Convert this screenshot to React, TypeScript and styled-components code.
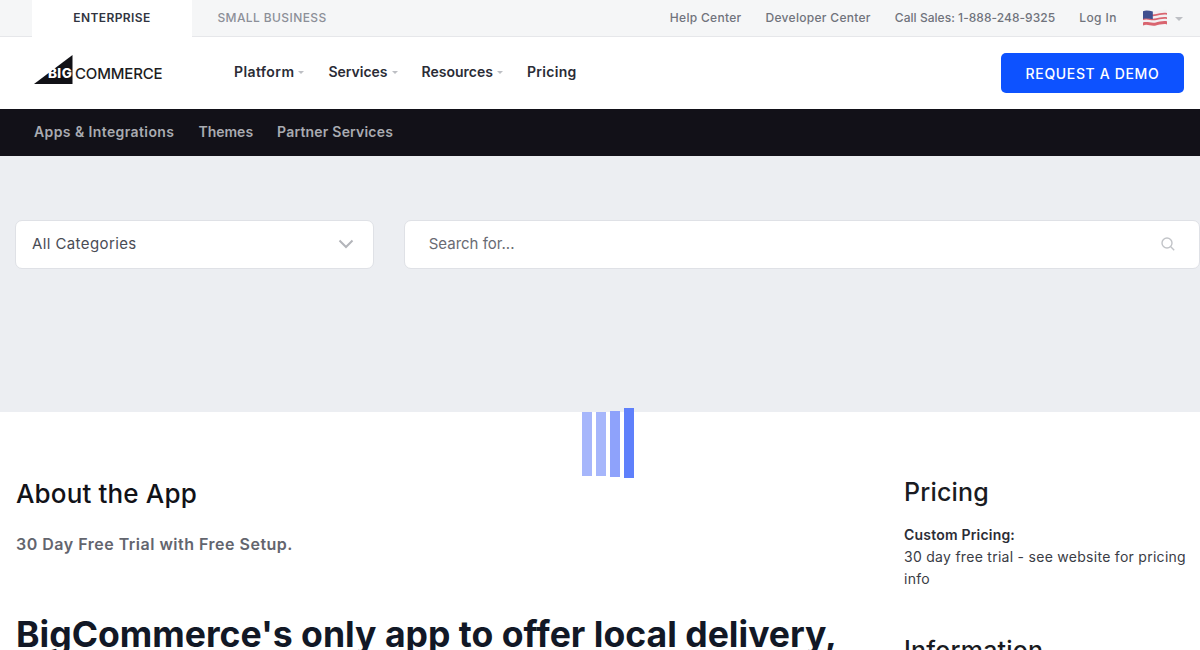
import * as React from 'react';
import styled, { createGlobalStyle } from 'styled-components';

const GlobalStyle = createGlobalStyle`
  html, body {
    margin: 0;
    padding: 0;
    height: 650px;
    overflow: hidden;
    background: #fff;
    font-family: Inter, "Liberation Sans", sans-serif;
  }
`;

const Page = styled.div`
  width: 1200px;
  height: 650px;
  overflow: hidden;
  position: relative;
`;

const TopBar = styled.div`
  height: 36px;
  display: flex;
  align-items: center;
  justify-content: space-between;
  padding: 0 17px 0 32px;
  background: #f5f6f7;
  border-bottom: 1px solid #e6e7ea;
`;

const Tabs = styled.div`
  display: flex;
  align-self: stretch;
`;

const Tab = styled.a<{ $active?: boolean }>`
  width: 160px;
  height: 37px;
  display: flex;
  align-items: center;
  justify-content: center;
  box-sizing: border-box;
  padding-bottom: 2px;
  background: ${(p) => (p.$active ? '#fff' : 'transparent')};
  color: ${(p) => (p.$active ? '#313440' : '#8c8f98')};
  font-size: 12px;
  font-weight: ${(p) => (p.$active ? 600 : 500)};
  letter-spacing: 0.4px;
`;

const TopLinks = styled.div`
  display: flex;
  align-items: center;
  gap: 24px;
  margin-top: -1px;
`;

const TopLink = styled.a<{ $track?: number }>`
  color: #70737c;
  font-size: 12px;
  font-weight: 500;
  letter-spacing: ${(p) => p.$track ?? 0.3}px;
`;

const FlagGroup = styled.div`
  display: flex;
  align-items: center;
  gap: 8px;
  margin-left: 2px;
`;

const MainNav = styled.div`
  height: 72px;
  display: flex;
  align-items: center;
  padding: 0 16px 0 34px;
  background: #fff;
`;

const LogoWrap = styled.div`
  width: 200px;
  height: 44px;
  margin-top: -7px;
  display: flex;
  align-items: center;
  position: relative;
`;

const LogoBig = styled.span`
  position: absolute;
  left: 14px;
  top: 17px;
  color: #fff;
  font-size: 13.5px;
  font-weight: 800;
  letter-spacing: 0.4px;
`;

const LogoCommerce = styled.span`
  position: absolute;
  left: 41px;
  top: 16px;
  color: #1d1d22;
  font-size: 15px;
  font-weight: 500;
  letter-spacing: -0.15px;
`;

const MenuList = styled.nav`
  display: flex;
  align-items: center;
  gap: 24px;
  margin-top: -4px;
`;

const MenuItem = styled.a<{ $track?: number }>`
  display: flex;
  align-items: center;
  gap: 4px;
  color: #2a2c36;
  font-size: 14px;
  font-weight: 600;
  letter-spacing: ${(p) => p.$track ?? 0}px;
`;

const Caret = styled.span<{ $size?: number }>`
  width: 0;
  height: 0;
  margin-top: 2px;
  border-left: ${(p) => p.$size ?? 3}px solid transparent;
  border-right: ${(p) => p.$size ?? 3}px solid transparent;
  border-top: ${(p) => p.$size ?? 3}px solid #bdbfc4;
`;

const DemoButton = styled.a`
  margin-left: auto;
  width: 183px;
  height: 40px;
  display: flex;
  align-items: center;
  justify-content: center;
  background: #0d52ff;
  border-radius: 5px;
  color: #fff;
  font-size: 14px;
  font-weight: 500;
  letter-spacing: 0.65px;
`;

const SubNav = styled.div`
  height: 47px;
  box-sizing: border-box;
  padding: 0 34px 2px;
  display: flex;
  align-items: center;
  gap: 24px;
  background: #121118;
`;

const SubLink = styled.a<{ $track?: number }>`
  color: #a9abb1;
  font-size: 14px;
  font-weight: 600;
  letter-spacing: ${(p) => p.$track ?? 0}px;
`;

const FilterBand = styled.div`
  height: 256px;
  box-sizing: border-box;
  display: flex;
  gap: 30px;
  padding: 64px 0 0 15px;
  background: #eceef2;
`;

const Field = styled.div<{ $grow?: boolean }>`
  height: 49px;
  box-sizing: border-box;
  padding-bottom: 2px;
  display: flex;
  align-items: center;
  justify-content: space-between;
  background: #fff;
  border: 1px solid #dfe1e6;
  border-radius: 7px;
  ${(p) =>
    p.$grow
      ? 'width: 797px; padding-left: 24px; padding-right: 23px;'
      : 'width: 359px; padding-left: 16px; padding-right: 19px;'}
`;

const FieldText = styled.span<{ $muted?: boolean }>`
  color: ${(p) => (p.$muted ? '#696b73' : '#4a4c55')};
  font-size: 15px;
  letter-spacing: ${(p) => (p.$muted ? 0 : 0.4)}px;
`;

const Body = styled.div`
  display: flex;
  justify-content: space-between;
  padding: 0 12px 0 16px;
`;

const MainColumn = styled.div`
  width: 860px;
  padding-top: 66px;
`;

const AboutTitle = styled.h2`
  margin: 0;
  color: #111218;
  font-size: 26px;
  line-height: 32px;
  font-weight: 500;
  letter-spacing: 0.15px;
`;

const Lead = styled.p`
  margin: 23px 0 0;
  color: #63656e;
  font-size: 16px;
  line-height: 22px;
  font-weight: 600;
  letter-spacing: 0.5px;
`;

const Headline = styled.h1`
  margin: 57px 0 0;
  color: #121826;
  font-size: 35.6px;
  line-height: 46px;
  font-weight: 700;
  white-space: nowrap;
`;

const SideColumn = styled.aside`
  width: 284px;
  padding-top: 64px;
`;

const SideTitle = styled.h3`
  margin: 0;
  color: #1a1b22;
  font-size: 25px;
  line-height: 32px;
  font-weight: 500;
  letter-spacing: 0.2px;
`;

const SideStrong = styled.div`
  margin-top: 16px;
  color: #2b2d36;
  font-size: 14px;
  line-height: 22px;
  font-weight: 600;
  letter-spacing: 0.2px;
`;

const SideText = styled.p`
  margin: 0;
  color: #3a3c45;
  font-size: 14px;
  line-height: 22px;
  letter-spacing: 0.28px;
`;

const SideBlock = styled.div`
  margin-top: 44px;
`;

const Loader = styled.div`
  position: absolute;
  left: 582px;
  top: 408px;
  height: 72px;
  display: flex;
  align-items: center;
  gap: 4px;
`;

const LoaderBar = styled.span<{ $h: number; $color: string; $lift?: number }>`
  width: 10px;
  height: ${(p) => p.$h}px;
  margin-bottom: ${(p) => p.$lift ?? 0}px;
  background: ${(p) => p.$color};
`;

const UsFlag = () => (
  <svg width="24" height="18" viewBox="1 0.5 22 16.500">
    <path d="M1 2.500c4-1.600 7 .8 11 .2s7-2 11-1.200v13.600c-4-.8-7 .6-11 1.200s-7-1.800-11-.2z" fill="#f3f0f2" />
    <path d="M1 5.200c4-1 7 .8 11 .2s7-2 11-1.200v1.600c-4-.8-7 .6-11 1.200S5 5.200 1 6.800zM1 9c4-1 7 .8 11 .2s7-2 11-1.200v1.600c-4-.8-7 .6-11 1.200S5 9 1 10.600zM1 12.800c4-1 7 .8 11 .2s7-2 11-1.200v2.800c-4-.8-7 .6-11 1.200s-7-1.800-11-.2z" fill="#d9646f" />
    <path d="M1 2.500c3-1.200 6-.3 9 .2v7.200c-3-.5-6-1.200-9-.3z" fill="#3f4f8f" />
  </svg>
);

const BigLogoMark = () => (
  <svg width="40" height="30" viewBox="0 0 40 30">
    <path d="M0 29 38.500 0v29z" fill="#111116" />
  </svg>
);

const Chevron = () => (
  <svg width="16" height="10" viewBox="0 0 16 10" fill="none" stroke="#b3b5ba" strokeWidth="2">
    <path d="M1.500 1.500 8 8l6.500-6.500" />
  </svg>
);

const SearchIcon = () => (
  <svg width="16" height="16" viewBox="0 0 16 16" fill="none" stroke="#c2c4c8" strokeWidth="1.400">
    <circle cx="7" cy="7" r="5" />
    <path d="m10.800 10.800 3.400 3.400" />
  </svg>
);

export default function App() {
  return (
    <Page>
      <GlobalStyle />
      <TopBar>
        <Tabs>
          <Tab $active>ENTERPRISE</Tab>
          <Tab>SMALL BUSINESS</Tab>
        </Tabs>
        <TopLinks>
          <TopLink>Help Center</TopLink>
          <TopLink>Developer Center</TopLink>
          <TopLink $track={0.04}>Call Sales: 1-888-248-9325</TopLink>
          <TopLink $track={0.45}>Log In</TopLink>
          <FlagGroup>
            <UsFlag />
            <Caret $size={4} />
          </FlagGroup>
        </TopLinks>
      </TopBar>
      <MainNav>
        <LogoWrap>
          <BigLogoMark />
          <LogoBig>BIG</LogoBig>
          <LogoCommerce>COMMERCE</LogoCommerce>
        </LogoWrap>
        <MenuList>
          <MenuItem $track={0.4}>Platform <Caret /></MenuItem>
          <MenuItem>Services <Caret /></MenuItem>
          <MenuItem>Resources <Caret /></MenuItem>
          <MenuItem $track={0.3}>Pricing</MenuItem>
        </MenuList>
        <DemoButton>REQUEST A DEMO</DemoButton>
      </MainNav>
      <SubNav>
        <SubLink $track={0.4}>Apps &amp; Integrations</SubLink>
        <SubLink>Themes</SubLink>
        <SubLink $track={0.2}>Partner Services</SubLink>
      </SubNav>
      <FilterBand>
        <Field>
          <FieldText>All Categories</FieldText>
          <Chevron />
        </Field>
        <Field $grow>
          <FieldText $muted>Search for...</FieldText>
          <SearchIcon />
        </Field>
      </FilterBand>
      <Body>
        <MainColumn>
          <AboutTitle>About the App</AboutTitle>
          <Lead>30 Day Free Trial with Free Setup.</Lead>
          <Headline>BigCommerce's only app to offer local delivery,</Headline>
        </MainColumn>
        <SideColumn>
          <SideTitle>Pricing</SideTitle>
          <SideStrong>Custom Pricing:</SideStrong>
          <SideText>30 day free trial - see website for pricing info</SideText>
          <SideBlock>
            <SideTitle>Information</SideTitle>
          </SideBlock>
        </SideColumn>
      </Body>
      <Loader>
        <LoaderBar $h={64} $color="#a6b6fb" />
        <LoaderBar $h={64} $color="#a6b6fb" />
        <LoaderBar $h={66} $color="#8ea2fb" />
        <LoaderBar $h={70} $color="#5f80fb" $lift={2} />
      </Loader>
    </Page>
  );
}
